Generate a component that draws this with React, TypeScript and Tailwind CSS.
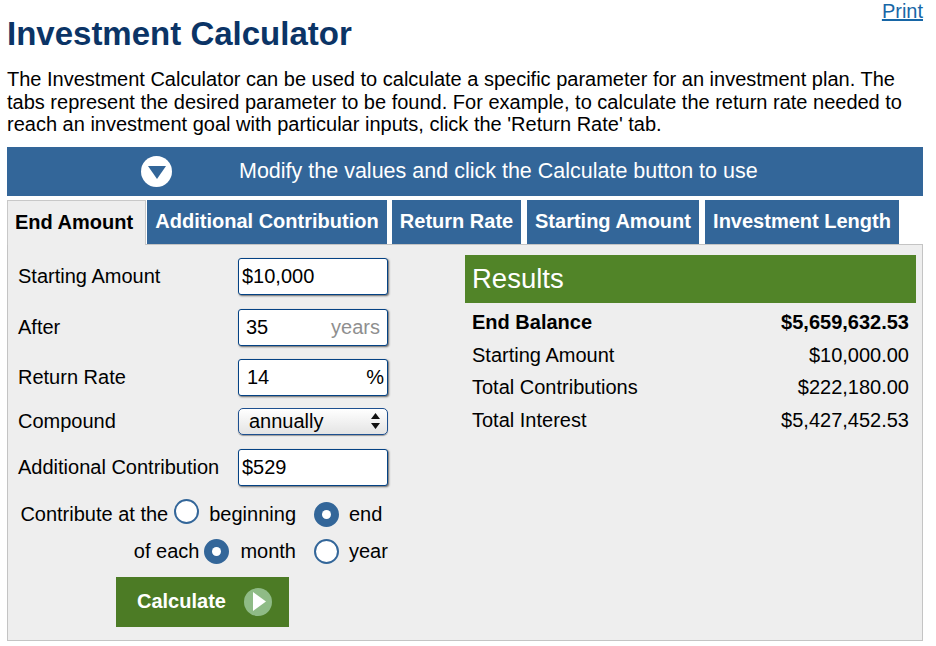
import React from "react";

const tabs = [
  { label: "Additional Contribution", w: "w-[240px]", gap: "ml-[1px]" },
  { label: "Return Rate", w: "w-[129px]", gap: "ml-[5px]" },
  { label: "Starting Amount", w: "w-[172px]", gap: "ml-[6px]" },
  { label: "Investment Length", w: "w-[194px]", gap: "ml-[6px]" },
];

const results = [
  { label: "End Balance", value: "$5,659,632.53", bold: true },
  { label: "Starting Amount", value: "$10,000.00" },
  { label: "Total Contributions", value: "$222,180.00" },
  { label: "Total Interest", value: "$5,427,452.53" },
];

function Radio({ checked }: { checked?: boolean }) {
  return (
    <span
      className={`inline-flex h-[25px] w-[25px] shrink-0 items-center justify-center rounded-full border-2 border-[#336699] ${
        checked ? "bg-[#336699]" : "bg-white"
      }`}
    >
      {checked && <span className="h-[9px] w-[9px] rounded-full bg-white" />}
    </span>
  );
}

function Field({ value, pad, suffix, suffixClass }: { value: string; pad: string; suffix?: string; suffixClass?: string }) {
  return (
    <div className="flex h-[37px] w-[150px] items-center rounded-[3px] border border-[#044284] bg-white shadow-[1px_1px_2px_#666]">
      <input
        readOnly
        value={value}
        className={`h-full w-full min-w-0 bg-transparent text-[20px] text-black outline-none ${pad}`}
      />
      {suffix && <span className={`shrink-0 ${suffixClass}`}>{suffix}</span>}
    </div>
  );
}

function Row({ label, children, h, mt }: { label: string; children: React.ReactNode; h: string; mt: string }) {
  return (
    <div className={`flex items-center ${h} ${mt}`}>
      <span className="w-[220px]">{label}</span>
      {children}
    </div>
  );
}

export default function App() {
  return (
    <div className="min-h-[646px] w-[936px] bg-white px-[7px] font-['Liberation_Sans',Arial,sans-serif] text-[20px] leading-[23px] text-black">
      <div className="flex w-[916px] items-start justify-between">
        <h1 className="pt-[15px] text-[33px] font-bold leading-[37px] text-[#0b3466]">Investment Calculator</h1>
        <a href="#" className="text-[20px] leading-[23px] text-[#1766a6] underline">
          Print
        </a>
      </div>

      <p className="mt-[16px] w-[916px] leading-[22.5px]">
        The Investment Calculator can be used to calculate a specific parameter for an investment plan. The tabs
        represent the desired parameter to be found. For example, to calculate the return rate needed to reach an
        investment goal with particular inputs, click the 'Return Rate' tab.
      </p>

      {/* modify bar */}
      <div className="mt-[11px] flex h-[49px] w-[916px] items-center bg-[#336699] pl-[134px] text-white">
        <span className="grid h-[31px] w-[31px] place-items-center rounded-full bg-white">
          <svg width="18" height="14" viewBox="0 0 18 14" className="mt-[3px]">
            <path d="M0 0 H18 L9 13 Z" fill="#336699" />
          </svg>
        </span>
        <span className="ml-[67px] text-[21.5px]">Modify the values and click the Calculate button to use</span>
      </div>

      {/* tabs */}
      <div className="relative z-10 mt-[4px] -mb-px flex h-[45px] w-[916px] items-start font-bold">
        <div className="flex h-[45px] w-[139px] items-center justify-center border border-b-0 border-[#c8c8c8] bg-[#eeeeee] pr-[5px]">
          End Amount
        </div>
        {tabs.map((t) => (
          <div
            key={t.label}
            className={`flex h-[44px] items-center justify-center bg-[#336699] text-white ${t.w} ${t.gap}`}
          >
            {t.label}
          </div>
        ))}
      </div>

      {/* panel */}
      <div className="flex h-[397px] w-[916px] border border-[#c4c4c4] bg-[#eeeeee]">
        <div className="pl-[10px] pt-[13px]">
          <Row label="Starting Amount" h="h-[37px]" mt="">
            <Field value="$10,000" pad="pl-[3px]" />
          </Row>
          <Row label="After" h="h-[37px]" mt="mt-[14px]">
            <Field value="35" pad="pl-[7px]" suffix="years" suffixClass="pr-[7px] text-[#8f8f8f]" />
          </Row>
          <Row label="Return Rate" h="h-[37px]" mt="mt-[13px]">
            <Field value="14" pad="pl-[8px]" suffix="%" suffixClass="pr-[3px]" />
          </Row>
          <Row label="Compound" h="h-[27px]" mt="mt-[12px]">
            <div className="flex h-[27px] w-[150px] items-center justify-between rounded-[5px] border border-[#1d4f8f] bg-gradient-to-b from-white to-[#e4e4e4] pl-[10px] pr-[7px] shadow-[0_1px_1px_#999]">
              <span>annually</span>
              <svg width="9" height="16" viewBox="0 0 9 16">
                <path d="M4.5 0 L9 6 H0 Z M0 10 H9 L4.5 16 Z" fill="#111" />
              </svg>
            </div>
          </Row>
          <Row label="Additional Contribution" h="h-[37px]" mt="mt-[14px]">
            <Field value="$529" pad="pl-[3px]" />
          </Row>

          <div className="mt-[16px] flex h-[25px] items-center">
            <div className="flex w-[278px] items-center justify-end">
              <span>Contribute at the</span>
              <span className="ml-[6px]">
                <Radio />
              </span>
              <span className="ml-[10px]">beginning</span>
            </div>
            <div className="ml-[18px] flex items-center">
              <Radio checked />
              <span className="ml-[10px]">end</span>
            </div>
          </div>
          <div className="mt-[12px] flex h-[25px] items-center">
            <div className="flex w-[278px] items-center justify-end">
              <span>of each</span>
              <span className="ml-[5px]">
                <Radio checked />
              </span>
              <span className="ml-[11px]">month</span>
            </div>
            <div className="ml-[18px] flex items-center">
              <Radio />
              <span className="ml-[10px]">year</span>
            </div>
          </div>

          <button className="ml-[98px] mt-[13px] flex h-[50px] w-[173px] items-center bg-[#4c7b25] pl-[21px] font-bold text-white">
            Calculate
            <span className="ml-[18px] grid h-[28px] w-[28px] place-items-center rounded-full bg-[#8fbb86]">
              <svg width="13" height="19" viewBox="0 0 13 19" className="ml-[3px]">
                <path d="M0 0 L13 9.5 L0 19 Z" fill="#fff" />
              </svg>
            </span>
          </button>
        </div>

        {/* results */}
        <div className="ml-auto mr-[6px] mt-[10px] w-[451px] self-start">
          <div className="flex h-[48px] items-center bg-[#518428] pl-[7px] text-[27.5px] text-white">Results</div>
          <div className="pt-[4px]">
            {results.map((r) => (
              <div
                key={r.label}
                className={`flex h-[32.5px] items-center justify-between px-[7px] ${r.bold ? "font-bold" : ""}`}
              >
                <span>{r.label}</span>
                <span>{r.value}</span>
              </div>
            ))}
          </div>
        </div>
      </div>
    </div>
  );
}
